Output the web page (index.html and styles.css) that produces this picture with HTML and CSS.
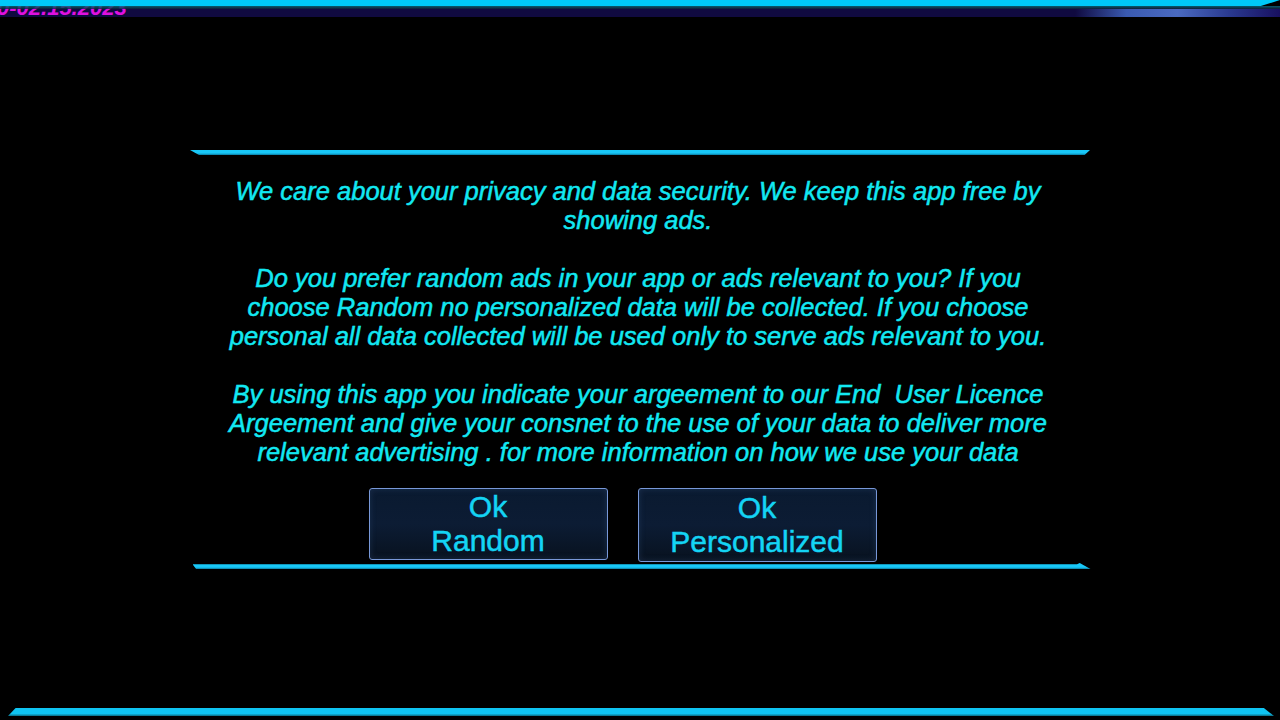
FILE: index.html
```html
<!DOCTYPE html>
<html>
<head>
<meta charset="utf-8">
<link rel="stylesheet" href="styles.css">
</head>
<body>
<div class="screen">
  <div class="topbar">
    <div class="stamp">0-02.15.2023</div>
    <div class="top-cyan"></div>
    <div class="top-teal"></div>
    <div class="top-navy"></div>
  </div>
  <div class="panel">
    <div class="rule rule-top"></div>
    <div class="message">
      <p>We care about your privacy and data security. We keep this app free by<br>showing ads.</p>
      <p>Do you prefer random ads in your app or ads relevant to you? If you<br>choose Random no personalized data will be collected. If you choose<br>personal all data collected will be used only to serve ads relevant to you.</p>
      <p>By using this app you indicate your argeement to our End &nbsp;User Licence<br>Argeement and give your consnet to the use of your data to deliver more<br>relevant advertising . for more information on how we use your data</p>
    </div>
    <div class="buttons">
      <button class="btn btn-random">Ok<br>Random</button>
      <button class="btn btn-personal">Ok<br>Personalized</button>
    </div>
    <div class="rule rule-bottom"></div>
  </div>
  <div class="bottombar"></div>
</div>
</body>
</html>
```
FILE: styles.css
```css
html, body {
  margin: 0;
  padding: 0;
  background: #000;
}
.screen {
  width: 1280px;
  height: 720px;
  position: relative;
  overflow: hidden;
  display: flex;
  flex-direction: column;
  background: #000;
  font-family: "Liberation Sans", Arial, sans-serif;
}
.topbar {
  position: relative;
  height: 17px;
  display: flex;
  flex-direction: column;
}
.stamp {
  position: absolute;
  left: -3px;
  top: -3px;
  z-index: 1;
  color: #e010e0;
  font-size: 22px;
  font-weight: bold;
  font-style: italic;
  line-height: 22px;
}
.top-cyan {
  position: relative;
  z-index: 2;
  height: 6px;
  background: #00c8f8;
  clip-path: polygon(0 0, 100% 0, 100% 0, 98.5% 100%, 0 100%);
}
.top-teal {
  position: relative;
  z-index: 2;
  height: 3px;
  background: linear-gradient(#0a6a80, #102040);
  opacity: 0.85;
}
.top-navy {
  height: 8px;
  background: linear-gradient(90deg, #100a40 0%, #100a40 84%, #3a5ab0 88%, #4a6ac0 92%, #2a3a90 96%, #181060 100%);
}
.panel {
  margin-top: 133px;
  display: flex;
  flex-direction: column;
  align-items: center;
}
.rule {
  height: 5px;
  background: linear-gradient(#18c8f8 0%, #18c8f8 60%, #0a7aa0 100%);
}
.rule-top {
  width: 900px;
  clip-path: polygon(0 0, 100% 0, 99.4% 100%, 1% 100%);
}
.rule-bottom {
  width: 898px;
  height: 6px;
  margin-left: 3px;
  margin-top: 1px;
  background: linear-gradient(#18c8f8 0%, #18c8f8 70%, #0a7aa0 100%);
  clip-path: polygon(0 20%, 98.5% 20%, 98.8% 0, 100% 100%, 0.4% 100%);
}
.message {
  margin-top: 22px;
  width: 900px;
  text-align: center;
  color: #12e8f2;
  font-style: italic;
  font-size: 25.5px;
  line-height: 29px;
  -webkit-text-stroke: 0.5px #12e8f2;
  transform: translateX(-2px);
}
.message p {
  margin: 0 0 29px 0;
}
.message p:last-child {
  margin-bottom: 0;
}
.buttons {
  margin-top: 21px;
  display: flex;
  gap: 30px;
  padding-right: 35px;
  align-items: flex-start;
}
.btn {
  width: 239px;
  height: 72px;
  padding: 0;
  border: 1px solid #7898d8;
  border-radius: 3px;
  background: linear-gradient(#0a1a30 0%, #0c1c34 50%, #08121f 100%);
  box-shadow: inset 0 0 6px rgba(60, 90, 140, 0.35);
  color: #14d4f4;
  font-family: "Liberation Sans", Arial, sans-serif;
  font-size: 30px;
  line-height: 34px;
  text-align: center;
  -webkit-text-stroke: 0.5px #14d4f4;
}
.btn-personal {
  height: 74px;
}
.bottombar {
  margin-top: auto;
  margin-bottom: 4px;
  margin-left: 8px;
  width: 1266px;
  height: 8px;
  background: linear-gradient(#0fc4f2 0%, #0fc4f2 70%, #0a6a80 100%);
  clip-path: polygon(0.6% 0, 99.2% 0, 100% 100%, 0 100%);
}
```
